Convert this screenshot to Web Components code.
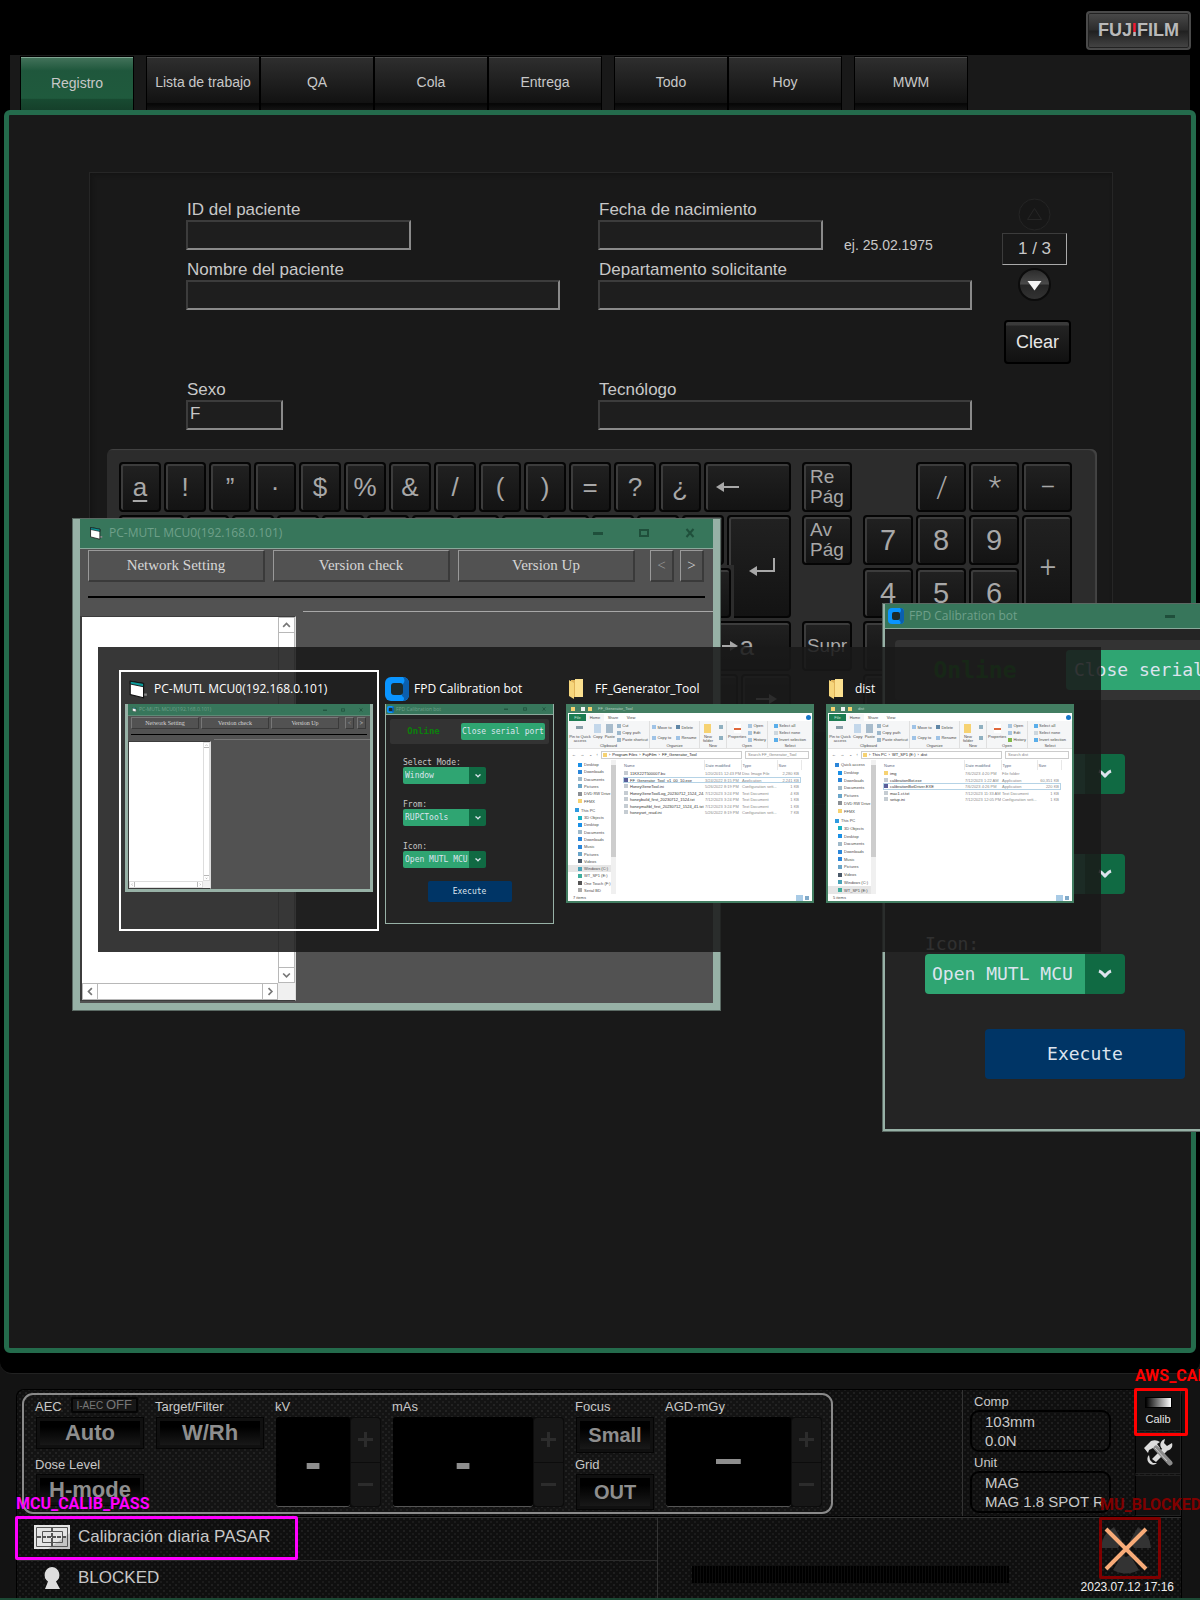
<!DOCTYPE html>
<html lang="es">
<head>
<meta charset="utf-8">
<meta name="viewport" content="width=device-width, initial-scale=1">
<title>Registro</title>
<style>
html,body{margin:0;background:#000;color:#c8c8c8;font-family:"Liberation Sans",sans-serif}
body{overflow-x:hidden}
</style>
</head>
<body>
<aws-console></aws-console>
<script>
const RESET = `*{box-sizing:border-box}button,input,select{font:inherit;color:inherit;margin:0;border-radius:0}button{padding:0;border:0;background:none;cursor:pointer}svg{display:block;flex:none}`;
class Base extends HTMLElement {
  connectedCallback() {
    if (this.shadowRoot) return;
    const t = document.createElement('template');
    t.innerHTML = `<style>${RESET}${this.constructor.css}</style>${this.html()}`;
    this.attachShadow({ mode: 'open' }).append(t.content.cloneNode(true));
  }
  a(n, d = '') { return this.getAttribute(n) ?? d; }
}
const def = (name, css, html) => customElements.define(name, class extends Base {
  static css = css;
  html() { return html(this); }
});

/* ---------- top bar and tabs ---------- */
def('brand-bar', `
:host{display:flex;justify-content:flex-end;height:55px;padding:11px 9px 0 0}
button{width:105px;height:39px;border:2px solid #4a4a4a;border-radius:4px;background:linear-gradient(#4a4a4a,#2c2c2c 48%,#202020 52%,#454545);box-shadow:inset 0 0 0 1px #222;
font-weight:700;font-size:18px;color:#b9b9b9;white-space:nowrap}
i{font-style:normal;background:linear-gradient(#f01a30 0 60%,#b9b9b9 60%);-webkit-background-clip:text;color:transparent}
`, () => `<button>FUJ<i>I</i>FILM</button>`);

def('nav-tab', `
:host{display:block;width:114px;border:1px solid #000;border-bottom:0}
button{display:block;width:100%;height:54px;padding-bottom:6px;font-size:14px;white-space:nowrap;color:#c8c8c8;
border-top:1px solid #4d4d4d;background:linear-gradient(#2e2e2e,#121212 84%,#060606 86%,#161616)}
:host([active]) button{padding-bottom:3px;border-top-color:#7fa491;background:linear-gradient(#417159,#1f573c 24%,#1f5a3d 76%,#184a31 78%,#153f2a)}
`, () => `<button><slot></slot></button>`);

def('tab-strip', `
:host{display:block;padding:0 10px}
nav{display:flex;height:55px;padding:1px 0 0 10px;background:#191919}
.g{display:flex;margin-right:12px}
`, () => `<nav>
<div class="g"><nav-tab active>Registro</nav-tab></div>
<div class="g"><nav-tab>Lista de trabajo</nav-tab><nav-tab>QA</nav-tab><nav-tab>Cola</nav-tab><nav-tab>Entrega</nav-tab></div>
<div class="g"><nav-tab>Todo</nav-tab><nav-tab>Hoy</nav-tab></div>
<div class="g"><nav-tab>MWM</nav-tab></div></nav>`);

/* ---------- patient form ---------- */
def('labeled-field', `
:host{display:block;height:60px}
label{display:block;font-size:17px;line-height:20px;padding-left:1px;white-space:nowrap}
.r{display:flex;gap:21px}
input{display:block;height:30px;padding:0 2px 3px;font-size:17px;background:#1e1e1e;border:2px solid;border-color:#3c3c3c #8a8a8a #8a8a8a #3c3c3c;outline:0}
.h{font-size:14px;line-height:20px;padding-top:15px;white-space:nowrap}
`, e => `<label for="f">${e.a('label')}</label><div class="r"><input id="f" style="width:${e.a('w')}px" value="${e.a('value')}">${e.a('hint') ? `<span class="h">${e.a('hint')}</span>` : ''}</div>`);

def('page-stepper', `
:host{display:flex;flex-direction:column;align-items:center;width:65px}
button{display:block}
.o{height:32px;width:65px;margin:2px 0 3px;border:1px solid #3c3c3c;border-right-color:#aaa;border-bottom-color:#aaa;font-size:17px;line-height:30px;text-align:center}
.c{width:67px;height:44px;margin:19px 0 0 2px;align-self:flex-start;border:2px solid #000;border-radius:4px;font-size:18px;color:#e6e6e6;background:linear-gradient(#3a3a3a 0 3px,#232323 4px,#111)}
`, () => `
<button aria-label="Anterior"><svg width="33" height="33"><circle cx="16.500" cy="16.500" r="15.500" fill="#171717" stroke="#252525"/><path d="M16.500 10.500l7 11h-14z" fill="none" stroke="#262626"/></svg></button>
<output class="o">1 / 3</output>
<button aria-label="Siguiente"><svg width="33" height="33"><defs><linearGradient id="g" x2="0" y2="1"><stop offset="0" stop-color="#2a2a2a"/><stop offset=".48" stop-color="#4a4a4a"/><stop offset=".52" stop-color="#262626"/><stop offset="1" stop-color="#333"/></linearGradient></defs><circle cx="16.500" cy="16.500" r="15.500" fill="url(#g)" stroke="#0c0c0c" stroke-width="2"/><path d="M9.500 13h14l-7 9.500z" fill="#f4f4f4"/></svg></button>
<button class="c">Clear</button>`);

def('patient-form', `
:host{display:grid;grid-template-columns:412px 404px 1fr;padding:27px 0 9px 96px;grid-template-rows:repeat(4,60px)}
page-stepper{grid-column:3;grid-row:1/5;margin-top:-2px}
.l{grid-column:1}.m{grid-column:2}.r2{grid-row:2}.r4{grid-row:4}.r1{grid-row:1}
`, () => `
<labeled-field class="l r1" label="ID del paciente" w="225"></labeled-field>
<labeled-field class="m r1" label="Fecha de nacimiento" w="225" hint="ej. 25.02.1975"></labeled-field>
<labeled-field class="l r2" label="Nombre del paciente" w="374"></labeled-field>
<labeled-field class="m r2" label="Departamento solicitante" w="374"></labeled-field>
<labeled-field class="l r4" label="Sexo" w="97" value="F"></labeled-field>
<labeled-field class="m r4" label="Tecnólogo" w="374"></labeled-field>
<page-stepper></page-stepper>`);

/* ---------- on-screen keyboard ---------- */
def('key-cap', `
:host{display:block;flex:0 0 42px;height:50px}
button{display:flex;align-items:center;justify-content:center;width:100%;height:100%;border:2px solid #050505;border-radius:4px;background:linear-gradient(#212121,#131313);
box-shadow:inset 1px 1px 0 1px #3c3c3c;font-family:"Liberation Sans",sans-serif;font-size:26px;color:#a8a8a8}
:host([num]) button{font-size:29px}
:host([thin]) button{font-family:Roboto,"Liberation Sans",sans-serif;font-weight:300;padding-left:2px}
:host([small]) button{font-size:19px;line-height:20px;text-align:left}
:host([under]) button{text-decoration:underline;text-decoration-thickness:2px;text-underline-offset:4px}
:host([left]) button{justify-content:flex-start;padding-left:10px}
:host([end]) button{justify-content:flex-end;padding-right:35px}
`, () => `<button><slot></slot></button>`);

const arrow = (d, w = 24, h = 16) => `<svg width="${w}" height="${h}" fill="#a8a8a8" stroke="#a8a8a8" stroke-width="2">${d}</svg>`;
def('screen-keyboard', `
:host{display:flex;gap:11px;width:990px;margin-left:17px;padding:13px 12px 8px;background:#2c2c2c;border-radius:6px;box-shadow:inset -2px 1px 1px #444}
.b,.c{display:flex;flex-direction:column;gap:3px}.b{width:672px}
.r,.w{display:flex;gap:3px}
.f{flex:1}
.w .c{width:612px}
.r2{width:605px}
.en{flex:none;height:103px;width:64px;margin-left:-7px}
.en button{width:64px;height:103px;padding-left:7px;clip-path:polygon(0 0,100% 0,100% 100%,7px 100%,7px 50px,0 50px);border:2px solid #050505;border-radius:4px;background:linear-gradient(#212121,#131313);box-shadow:inset 1px 1px 0 1px #3c3c3c;display:grid;place-items:center}
.k50 key-cap,.n key-cap{flex-basis:50px}
.k50{width:50px}
.n{display:grid;grid-template-columns:repeat(4,50px);grid-auto-rows:50px;gap:3px}
.n .p{grid-row:span 2;height:103px}
.sp{height:50px}
`, () => {
  const blank = n => '<key-cap></key-cap>'.repeat(n);
  return `
<div class="b">
 <div class="r"><key-cap under>a</key-cap>${['!', '”', '·', '$', '%', '&amp;', '/', '(', ')', '=', '?', '¿'].map(k => `<key-cap>${k}</key-cap>`).join('')}<key-cap class="f" left>${arrow('<path d="M6 8h17"/><path d="M0 8l8-5v10z" stroke="none"/>')}</key-cap></div>
 <div class="w"><div class="c"><div class="r r2"><key-cap class="f"></key-cap>${blank(12)}</div><div class="r"><key-cap class="f"></key-cap>${blank(12)}</div></div>
 <div class="en"><button aria-label="Intro">${arrow('<path d="M25 2v13H6" fill="none"/><path d="M0 15l8-5v10z" stroke="none"/>', 28, 22)}</button></div></div>
 <div class="r"><key-cap></key-cap>${blank(10)}<key-cap class="f" end>${arrow('<path d="M2 8h10"/><path d="M18 8l-8-5v10z" stroke="none"/>', 20, 16)}a</key-cap></div>
 <div class="r k5"><key-cap style="flex-basis:90px"></key-cap><key-cap class="f"></key-cap><key-cap style="flex-basis:50px"></key-cap><key-cap style="flex-basis:50px"></key-cap><key-cap style="flex-basis:50px">${arrow('<path d="M2 8h14"/><path d="M23 8l-8-5v10z" stroke="none"/>')}</key-cap></div>
</div>
<div class="c k50"><key-cap small>Re<br>Pág</key-cap><key-cap small>Av<br>Pág</key-cap><div class="sp"></div><key-cap small>Supr</key-cap></div>
<div class="n"><span></span><key-cap num thin>/</key-cap><key-cap num thin>*</key-cap><key-cap num thin>−</key-cap>
<key-cap num>7</key-cap><key-cap num>8</key-cap><key-cap num>9</key-cap><key-cap num thin class="p">+</key-cap>
<key-cap num>4</key-cap><key-cap num>5</key-cap><key-cap num>6</key-cap>${blank(3)}<key-cap class="p"></key-cap>${blank(3)}</div>`;
});

def('register-view', `
:host{display:block;flex:1;margin:0 4px;border:5px solid #246b4c;border-radius:6px;background:#191919;padding:57px 78px 0 80px}
section{border:1px solid #262626;background:#191919;padding-bottom:72px;box-shadow:inset 2px 2px 4px #141414}
`, () => `<section><patient-form></patient-form><screen-keyboard></screen-keyboard></section>`);

/* ---------- icons ---------- */
const vbIcon = s => `<svg width="${s}" height="${s}" viewBox="0 0 18 18"><path d="M12 13h5v2h-4z" fill="#888"/><path d="M2 2l12 2v13L2 14z" fill="#fff" stroke="#111"/><path d="M2 2l12 2v3L2 4.500z" fill="#0c9a9a" stroke="#111" stroke-width=".8"/></svg>`;
const ctkIcon = s => `<svg width="${s}" height="${s}" viewBox="0 0 24 24"><rect width="24" height="24" rx="6" fill="#0a95ff"/><path d="M18 0a6 6 0 0 1 6 6v12a6 6 0 0 1-6 6c2-2 1-4-1-5l1-12c2-2 2-5 0-7z" fill="#0b5fae"/><rect x="6" y="6" width="12" height="12" rx="3" fill="#1d2b2b"/></svg>`;
const folderIcon = s => `<svg width="${s}" height="${Math.round(s * 20 / 14)}" viewBox="0 0 14 20"><path d="M2 1h12v17H2z" fill="#e0b45a"/><path d="M6 0h8v18H6z" fill="#fbe08f"/><path d="M0 1l5 3v16l-5-3z" fill="#f6d67c"/></svg>`;
const winBtns = `<div class="wb"><button aria-label="Minimizar"><svg viewBox="0 0 10 10"><path d="M0 5.500h10" stroke-width="3"/></svg></button><button aria-label="Maximizar"><svg viewBox="0 0 10 10"><path d="M1 2h8v6H1z"/></svg></button><button aria-label="Cerrar"><svg viewBox="0 0 10 10"><path d="M1.500 1l7 8M8.500 1l-7 8"/></svg></button></div>`;
const TITLE = `
.t{display:flex;align-items:center;flex:none;height:var(--th);padding-left:var(--tp);gap:var(--tg);background:#37765b;border-bottom:1px solid #8aa99b;color:#6fa08a;font:var(--tf)/1 "Open Sans",sans-serif;white-space:nowrap}
.wb{display:flex;margin-left:auto}.wb button{width:var(--ww);display:grid;place-items:center}
.wb svg{width:var(--ws);height:var(--ws);fill:none;stroke:#1f4f3b;stroke-width:2}`;

/* ---------- MUTL window ---------- */
def('mutl-window', `
:host{display:flex;flex-direction:column;width:649px;height:493px;border:solid #97b1a6;border-width:0 8px 8px;background:#525252;outline:1px solid #5b6a64;outline-offset:-1px;
--th:31px;--tp:9px;--tg:6px;--tf:12px;--ww:46px;--ws:10px;--bw:177px;--bh:32px;--bf:15px;--g:8px;--sp:15px;--nw:24px;--ng:6px;--lw:216px;--sb:17px;--px:8px;--ic:14px;--ra:14px;--rb:13px;--rc:5px;--lb:2px}
:host([mini]){width:248px;height:188px;border-width:0 3px 3px;outline:0;
--th:12px;--tp:4px;--tg:2px;--tf:5px;--ww:18px;--ws:4px;--bw:68px;--bh:12px;--bf:6px;--g:2px;--sp:6px;--nw:9px;--ng:3px;--lw:83px;--sb:7px;--px:3px;--ic:5px;--ra:5px;--rb:4px;--rc:2px;--lb:0px}
:host([mini]) .t{border-bottom-color:#5d8a76}
${TITLE}
.t .ic{width:var(--ic);height:var(--ic)}.t .ic svg{width:100%;height:100%}
.bar{display:flex;padding:1px var(--px) 0;gap:var(--g)}
.bar button{width:var(--bw);height:var(--bh);font:var(--bf)/1 "Liberation Serif",serif;color:#d6d6d6;background:#525252;border:solid;border-width:1px 2px 2px 1px;border-color:#999 #3a3a3a #3a3a3a #999}
.nv{display:flex;gap:var(--ng);margin-left:calc(var(--sp) - var(--g))}.nv button{width:var(--nw)}
.nv button:first-child{color:#999}
:host([mini]) .bar button{border-width:1px;border-color:#777 #3a3a3a #3a3a3a #777}
hr{height:2px;margin:var(--ra) var(--px) var(--rb);border:0;background:#000;flex:none}
:host([mini]) hr{height:1px}
.body{flex:1;display:flex;gap:7px;min-height:0}
:host([mini]) .body{gap:3px}
.list{width:var(--lw);margin:var(--rc) 0 var(--lb);display:grid;grid-template-columns:1fr var(--sb);grid-template-rows:1fr var(--sb);background:#fff;border:1px solid #3c3c3c;border-left-width:2px;border-right-color:#ddd}
:host([mini]) .list{border-left-width:1px}
.v,.h{display:flex;justify-content:space-between;border:1px solid #b8b8b8}
:host([mini]) .v,:host([mini]) .h{border-color:#ddd}
.v{flex-direction:column}
.v button,.h button{width:calc(var(--sb) - 2px);height:calc(var(--sb) - 2px);display:grid;place-items:center}
.v svg,.h svg{width:60%;height:60%;fill:none;stroke:#777;stroke-width:2}
.v button:first-child{border-bottom:1px solid #b8b8b8}.v button:last-child{border-top:1px solid #b8b8b8}
.h button:first-child{border-right:1px solid #b8b8b8}.h button:last-child{border-left:1px solid #b8b8b8}
.cn{background:#f0f0f0}
.pane{flex:1;border-top:1px solid #a8a8a8}
:host([mini]) .pane{border-color:#777}
`, () => {
  const ch = (d, l) => `<button aria-label="${l}"><svg viewBox="0 0 10 10"><path d="${d}"/></svg></button>`;
  return `<div class="t"><span class="ic">${vbIcon(14)}</span><span>PC-MUTL MCU0(192.168.0.101)</span>${winBtns}</div>
<div class="bar"><button>Network Setting</button><button>Version check</button><button>Version Up</button><div class="nv"><button>&lt;</button><button>&gt;</button></div></div><hr>
<div class="body"><div class="list"><div></div><div class="v">${ch('M1 7l4-4 4 4', 'Arriba')}${ch('M1 3l4 4 4-4', 'Abajo')}</div><div class="h">${ch('M7 1L3 5l4 4', 'Izquierda')}${ch('M3 1l4 4-4 4', 'Derecha')}</div><div class="cn"></div></div><div class="pane"></div></div>`;
});

/* ---------- FPD Calibration bot window ---------- */
def('fpd-window', `
:host{display:flex;flex-direction:column;width:406px;height:529px;border:3px solid #97b1a6;border-top:0;background:#242424;color:#dce4ee;outline:1px solid #5b6a64;outline-offset:-1px;
font:18px/20px "DejaVu Sans Mono",monospace;
--th:26px;--tp:3px;--tg:5px;--tf:12px;--ww:46px;--ws:10px;--ic:16px;--m:10px;--mv:11px;--fh:60px;--fp:9px;--op:20px;--bw:200px;--bh:40px;--of:23px;--l:40px;--mt:34px;--me:35px;--g:40px;--lh:20px;--sp:7px;--aw:40px;--eh:50px;--ch:14px;--r:4px}
:host([mini]){width:169px;height:220px;border-width:0 1px 1px;outline:0;font-size:8px;line-height:9px;
--th:11px;--tp:1px;--tg:2px;--tf:5px;--ww:19px;--ws:4px;--ic:7px;--m:4px;--mv:4px;--fh:25px;--fp:4px;--op:8px;--bw:84px;--bh:17px;--of:9px;--l:17px;--mt:14px;--me:13px;--g:16px;--lh:9px;--sp:2px;--aw:17px;--eh:21px;--ch:6px;--r:2px}
${TITLE}
.t .ic svg{width:var(--ic);height:var(--ic)}
.fr{display:flex;align-items:center;flex:none;height:var(--fh);margin:var(--mv) var(--m) 0;padding:0 var(--fp);background:#333;border-radius:var(--r)}
.on{flex:1;text-align:center;padding-right:var(--op);font-weight:700;font-size:var(--of);color:#0b800b}
button.go{height:var(--bh);width:var(--bw);background:#2fa572;border-radius:var(--r);white-space:nowrap;flex:none}
form{display:flex;flex-direction:column;gap:var(--g);margin:var(--mt) 0 0 var(--l)}
label{display:block;height:var(--lh);color:#c8c8c8}
.s{display:grid;width:var(--bw)}
:host([mini]) .s{width:83px}
.s>*{grid-area:1/1}
select{appearance:none;border:0;height:var(--bh);padding:0 0 0 var(--sp);border-radius:var(--r);background:linear-gradient(90deg,#2fa572 calc(100% - var(--aw)),#106a43 0);outline:0}
.s svg{width:var(--ch);height:var(--ch);place-self:center end;margin-right:calc((var(--aw) - var(--ch))/2);fill:none;stroke:#dce4ee;stroke-width:3;pointer-events:none}
button.ex{height:var(--eh);width:var(--bw);align-self:center;margin-top:var(--me);background:#003566;border-radius:var(--r)}
`, e => {
  const fields = e.hasAttribute('mini') ? [['Select Mode:', 'Window'], ['From:', 'RUPCTools'], ['Icon:', 'Open MUTL MCU']] : [['', ''], ['', ''], ['Icon:', 'Open MUTL MCU']];
  return `<div class="t"><span class="ic">${ctkIcon(16)}</span><span>FPD Calibration bot</span>${winBtns}</div>
<div class="fr"><span class="on">Online</span><button class="go">Close serial port</button></div>
<form>${fields.map(([l, v], i) => `<div><label for="s${i}">${l}</label><div class="s"><select id="s${i}"><option>${v}</option></select><svg viewBox="0 0 14 14"><path d="M1 4c3 1 4 3 6 5 2-2 3-4 6-5"/></svg></div></div>`).join('')}</form>
<button class="ex">Execute</button>`;
});

/* ---------- Explorer preview ---------- */
const FILES = {
  FF_Generator_Tool: {
    path: ['Program Files', 'FujiFilm', 'FF_Generator_Tool'], hi: 1,
    nav: ['Desktop', 'Downloads', 'Documents', 'Pictures', 'DVD RW Drive (D:)', 'FFMX', '*This PC', '3D Objects', 'Desktop', 'Documents', 'Downloads', 'Music', 'Pictures', 'Videos', '!Windows (C:)', 'WT_SP1 (E:)', 'One Touch (F:)', 'Serial BD'],
    rows: [['11KX22T500007.bu', '1/20/2015 12:43 PM', 'Disc Image File', '2,280 KB'], ['FF_Generator_Tool_v1_00_10.exe', '3/24/2022 8:15 PM', 'Application', '2,241 KB'], ['HoneyGeneTool.ini', '5/26/2022 8:19 PM', 'Configuration sett...', '1 KB'], ['HoneyGeneToolLog_20230712_1524_24.txt', '7/12/2023 3:24 PM', 'Text Document', '4 KB'], ['honeybuild_first_20230712_1524.txt', '7/12/2023 3:24 PM', 'Text Document', '1 KB'], ['honeymaftbl_first_20230712_1524_41.txt', '7/12/2023 3:24 PM', 'Text Document', '1 KB'], ['honeyset_read.ini', '5/26/2022 8:19 PM', 'Configuration sett...', '7 KB']]
  },
  dist: {
    path: ['This PC', 'WT_SP1 (E:)', 'dist'], hi: 2,
    nav: ['*Quick access', 'Desktop', 'Downloads', 'Documents', 'Pictures', 'DVD RW Drive (D:)', 'FFMX', '*This PC', '3D Objects', 'Desktop', 'Documents', 'Downloads', 'Music', 'Pictures', 'Videos', 'Windows (C:)', '!WT_SP1 (E:)'],
    rows: [['img', '7/6/2023 4:20 PM', 'File folder', ''], ['calibrationBot.exe', '7/12/2023 1:22 AM', 'Application', '60,351 KB'], ['calibrationBotDriver.EXE', '7/6/2023 4:26 PM', 'Application', '220 KB'], ['mac1.ct.txt', '7/12/2023 11:33 AM', 'Text Document', '1 KB'], ['setup.ini', '7/12/2023 12:05 PM', 'Configuration sett...', '1 KB']]
  }
};
const COL = { Desktop: '#1a8fe6', Downloads: '#2b86d9', Documents: '#9fb9c9', Pictures: '#6aa5c9', 'DVD': '#8a8f94', FFMX: '#f6d272', This: '#2f9be0', '3D': '#19b3c4', Music: '#2b86d9', Videos: '#4b5a6a', Windows: '#4aa3b8', WT_SP1: '#3fae9e', One: '#555', Quick: '#2b86d9', Serial: '#aaa' };
def('explorer-window', `
:host{display:flex;flex-direction:column;width:248px;height:199px;border:2px solid #437e62;border-top:0;background:#fff;color:#4a4a4a;font:4px/5px "Liberation Sans",sans-serif}
.t{display:flex;align-items:center;gap:3px;height:9px;padding-left:3px;background:#437e62;color:#b9d2c6;flex:none}
.tabs{display:flex;height:8px;align-items:center;flex:none;padding:1px 1px 0 1px}
.tabs button{width:18px;height:7px;display:grid;place-items:center}
.tabs button.f{background:#1c7d52;color:#cfe5da;width:17px}
.tabs button.h{background:#f5f6f7}
.q{width:5px;height:5px;border-radius:50%;background:#1877c9;margin-left:auto}
.rb{display:flex;height:28px;background:#f5f6f7;border-bottom:1px solid #e2e2e2;flex:none}
.g{display:grid;grid-template-rows:1fr 5px;justify-items:center;border-right:1px solid #e0e0e0;white-space:nowrap;overflow:hidden;padding:1px 1px 0}
.g:last-child{border:0}
.g>div{display:flex;gap:2px;width:100%;justify-content:space-around}
.big{display:flex;flex-direction:column;align-items:center;gap:2px;text-align:center;line-height:4px;padding-top:2px}
.col{display:flex;flex-direction:column;justify-content:space-around}
.col span{display:flex;align-items:center;gap:1px}
.i{display:inline-block;width:4px;height:4px;flex:none}
.I{display:block;width:7px;height:9px}
.ad{display:flex;align-items:center;height:11px;flex:none;padding:0 3px 0 4px;gap:3px}
.ad .nvs{width:26px;display:flex;justify-content:space-between}
.bx{display:flex;align-items:center;gap:2px;height:8px;border:1px solid #ccc;white-space:nowrap;width:141px;color:#222;padding-left:1px}
.bx+input{width:64px}
input{height:8px;border:1px solid #ccc;padding:0 2px;color:#888;outline:0;min-width:0;background:#fff}
input::placeholder{color:#888;opacity:1}
.m{flex:1;display:flex;min-height:0}
nav{width:43px;display:flex;flex-direction:column;overflow:hidden;padding-top:1px}
nav a{flex:1;display:flex;align-items:center;gap:2px;padding-left:10px;color:inherit;text-decoration:none;white-space:nowrap;min-height:0;overflow:hidden}
nav a.top{padding-left:7px}
nav a.hl{background:#e6e6e6}
nav a:not(:first-child).top{margin-top:2px}
.sb{width:5px;margin-right:7px;background:#f0f0f0;display:flex;flex-direction:column}.sb i{flex:0 0 92px;background:#cdcdcd;margin-top:5px}
table{border-collapse:collapse;table-layout:fixed;width:178px;align-self:flex-start}
th{font-weight:400;text-align:left;padding:0 0 0 1px;height:10px;color:#5a6a82;border-right:1px solid #e8e8e8}
td{padding:0 0 0 1px;height:6px;line-height:5px;overflow:hidden;white-space:nowrap;color:#8a8a8a}
tr:nth-child(odd) td{height:7px}
td:first-child{color:#333;font-family:"Liberation Sans Narrow","Liberation Sans",sans-serif}
td:first-child .i{margin-right:2px}
td:last-child{text-align:right;padding-right:2px}
tr.hi{outline:1px solid #b5d3e6;outline-offset:-1px}
.st{height:7px;display:flex;align-items:center;padding:0 3px 0 5px;flex:none;gap:2px}
.st b{margin-left:auto;width:7px;height:6px;background:#a9cbe6}.st i{width:4px;height:4px;background:#7fa9c9}
`, e => {
  const n = e.a('name'), d = FILES[n];
  const i = c => `<i class="i" style="background:${c}"></i>`, I = c => `<i class="I" style="background:${c}"></i>`;
  return `<div class="t">${i('#f6d272')}<span></span>${i('#f0f4f2')}${i('#f6d272')}<span></span><span>${n}</span></div>
<div class="tabs"><button class="f">File</button><button class="h">Home</button><button>Share</button><button>View</button><i class="q"></i></div>
<div class="rb">
<div class="g" style="width:82px"><div><span class="big">${I('linear-gradient(#f5f6f7 20%,#8ba0aa 20% 60%,#f5f6f7 60%)')}Pin to Quick<br>access</span><span class="big">${I('#c3d7ea')}Copy</span><span class="big">${I('#a8bccc')}Paste</span><span class="col"><span>${i('#9db8cc')}Cut</span><span>${i('#9db8cc')}Copy path</span><span>${i('#9db8cc')}Paste shortcut</span></span></div>Clipboard</div>
<div class="g" style="width:50px"><div><span class="col"><span>${i('#9fc3e6')}Move to</span><span>${i('#9fc3e6')}Copy to</span></span><span class="col"><span>${i('#5f86a6')}Delete</span><span>${i('#9fc3e6')}Rename</span></span></div>Organize</div>
<div class="g" style="width:27px"><div><span class="big">${I('#f6d272')}New<br>folder</span><span class="col"><span>${i('#8fb0c0')}</span><span>${i('#8fb0c0')}</span></span></div>New</div>
<div class="g" style="width:41px"><div><span class="big">${I('linear-gradient(#fff 40%,#e0683c 40% 70%,#fff 70%)')}Properties</span><span class="col"><span>${i('#a8c6e0')}Open</span><span>${i('#a8c6e0')}Edit</span><span>${i(n === 'dist' ? '#7fb84a' : '#a8c6e0')}History</span></span></div>Open</div>
<div class="g" style="flex:1"><div><span class="col"><span>${i('#5aaeea')}Select all</span><span>${i('#ccd6de')}Select none</span><span>${i('#5aaeea')}Invert selection</span></span></div>Select</div></div>
<div class="ad"><span class="nvs"><span>←</span><span>→</span><span>⌄</span><span>↑</span></span><div class="bx">${i('#f6d272')}${d.path.map(p => `<span>›</span><span>${p}</span>`).join('')}</div><input aria-label="Search" placeholder="Search ${n}"></div>
<div class="m"><nav>${d.nav.map(x => { const c = x[0] === '*' ? 'top' : x[0] === '!' ? 'hl' : ''; const s = x.replace(/^[*!]/, ''); return `<a href="#" class="${c}">${i(COL[s.split(' ')[0]])}${s}</a>`; }).join('')}</nav><div class="sb"><i></i></div>
<table><colgroup><col style="width:81px"><col style="width:37px"><col style="width:36px"><col style="width:24px"></colgroup><thead><tr><th>Name</th><th>Date modified</th><th>Type</th><th>Size</th></tr></thead>
<tbody>${d.rows.map((r, k) => `<tr${k === d.hi ? ' class="hi"' : ''}>${r.map((c, j) => `<td>${j ? '' : i(c === 'img' ? '#f6d272' : k === d.hi ? '#5a5f9a' : '#c5ccd2')}${c}</td>`).join('')}</tr>`).join('')}</tbody></table></div>
<div class="st">${d.rows.length} items<b></b><i></i></div>`;
});

/* ---------- task switcher ---------- */
def('switch-item', `
:host{display:block;border:2px solid transparent;padding:3px 4px 37px;height:261px;flex:none}
:host([selected]){border-color:#fff}
.h{display:flex;align-items:center;gap:5px;height:29px;padding-bottom:2px;font-size:12px;color:#fff;font-family:"Open Sans",sans-serif;white-space:nowrap}
.k{display:flex;justify-content:center}
.k.vb{padding:0 1px 0 3px}
.k.folder{padding:0 7px 0 3px}
`, e => {
  const k = e.a('kind'), ic = { vb: vbIcon(20), ctk: ctkIcon(24), folder: folderIcon(14) }[k];
  return `<div class="h"><span class="k ${k}">${ic}</span><span>${e.a('title-text')}</span></div><slot></slot>`;
});
def('task-switcher', `
:host{display:flex;align-items:flex-start;width:1003px;height:305px;padding:23px 21px;background:rgba(25,25,25,.87)}
`, () => `<switch-item selected kind="vb" title-text="PC-MUTL MCU0(192.168.0.101)"><mutl-window mini></mutl-window></switch-item>
<switch-item kind="ctk" title-text="FPD Calibration bot"><fpd-window mini></fpd-window></switch-item>
<switch-item kind="folder" title-text="FF_Generator_Tool"><explorer-window name="FF_Generator_Tool"></explorer-window></switch-item>
<switch-item kind="folder" title-text="dist"><explorer-window name="dist"></explorer-window></switch-item>`);

/* ---------- exposure console ---------- */
def('mode-button', `
:host{display:block}
button{display:block;width:100%;height:var(--h,32px);border:1px solid #050505;box-shadow:inset 0 0 0 3px #101010;background:linear-gradient(#000 30%,#1c1c1c);font-weight:700;font-size:var(--f,22px);line-height:20px;color:#8e8e8e}
`, () => `<button><slot></slot></button>`);
def('value-box', `
:host{display:flex;height:90px;border-radius:4px;background:#0a0a0a}
output{flex:1;display:grid;place-items:center;background:#000;border-bottom:1px solid #555;border-radius:3px;font-weight:700;font-size:50px;line-height:50px;color:#8e8e8e}
:host([wide]) output{padding-bottom:8px}
.b{width:31px;display:flex;flex-direction:column;background:#171717;border:1px solid #0c0c0c;border-radius:4px}
.b button{flex:1;display:grid;place-items:center}.b button+button{border-top:1px solid #0c0c0c}
`, () => `<output><slot></slot></output><div class="b"><button aria-label="Más"><svg width="15" height="15"><path d="M0 7.500h15M7.500 0v15" stroke="#2c2c2c" stroke-width="3"/></svg></button><button aria-label="Menos"><svg width="15" height="15"><path d="M0 7.500h15" stroke="#2c2c2c" stroke-width="3"/></svg></button></div>`);

def('exposure-panel', `
:host{display:flex;gap:12px;width:811px;height:121px;margin:3px 0 0 5px;padding:0 0 0 12px;border:2px solid #8a8a8a;border-radius:11px;background:#ffffff05;font-size:13px}
.c{display:flex;flex-direction:column;white-space:nowrap}
.l{display:flex;height:22px;line-height:24px;gap:9px;margin-left:-1px}
.s+.l{height:21px}
.l+*{flex:none}
.s{height:36px}
.o{width:67px;height:16px;margin-top:2px;border:2px solid #050505;border-radius:2px;background:#171717;color:#777;font-size:10px;line-height:12px}
.o b{font-weight:400;font-size:13px}
.tall{--h:36px;--f:20px}
`, () => `
<div class="c" style="width:108px"><div class="l"><span>AEC</span><button class="o">I-AEC <b>OFF</b></button></div><mode-button class="s">Auto</mode-button><div class="l">Dose Level</div><mode-button>H-mode</mode-button></div>
<div class="c" style="width:108px"><div class="l">Target/Filter</div><mode-button>W/Rh</mode-button></div>
<div class="c" style="width:105px"><div class="l">kV</div><value-box>-</value-box></div>
<div class="c" style="width:171px"><div class="l">mAs</div><value-box>-</value-box></div>
<div class="c tall" style="width:78px"><div class="l">Focus</div><mode-button class="s">Small</mode-button><div class="l">Grid</div><mode-button>OUT</mode-button></div>
<div class="c" style="width:156px"><div class="l">AGD-mGy</div><value-box wide>–</value-box></div>`);

def('unit-readout', `
:host{display:flex;flex-direction:column;width:173px;padding:1px 24px 4px 7px;border-left:1px solid #333;font-size:13px}
h4{margin:0 0 0 4px;font-weight:400;font-size:13px;line-height:22px;height:19px}
p{margin:0;width:141px;height:42px;padding:0 0 0 13px;border:2px solid #000;border-radius:9px;font-size:15px;line-height:19px;white-space:nowrap}
`, () => `<h4>Comp</h4><p>103mm<br>0.0N</p><h4>Unit</h4><p>MAG<br>MAG 1.8 SPOT R</p>`);

def('tool-column', `
:host{display:flex;flex-direction:column;width:46px;gap:1px}
button{flex:1;display:flex;flex-direction:column;align-items:center;justify-content:center;gap:5px;font-size:11px;line-height:12px;color:#e6e6e6;background:#121212;border:1px solid #222;border-left-color:#000}
button:first-child{padding-top:5px}
.g{width:27px;height:11px;background:linear-gradient(90deg,#000,#fff);border:1px solid #000}
`, () => `<button><span class="g"></span>Calib</button>
<button aria-label="Herramientas"><svg width="30" height="28" viewBox="0 0 30 28"><g fill="#dcdcdc"><path d="M1 9L8 2q5-2 9 1l-3 2 3 4-3 3-4-3-4 2-1 3z"/><path d="M29 4a6 6 0 1 1-7-4l-1 4 3 3z"/><path d="M6 16a5.500 5.500 0 1 0 8 8l-4 0-3-3z"/><path d="M20 9L9 20l4 3L24 12z"/></g><path d="M13 9l14 15" stroke="#8b8b8b" stroke-width="5" stroke-linecap="round"/><path d="M12 9l12 13" stroke="#ccc" stroke-width="1"/></svg></button>
<button aria-label="Libre"></button>`);

def('status-area', `
:host{display:grid;grid-template-columns:641px 1fr;height:81px;border-top:1px solid #333;flex:none}
.l{border-right:1px solid #333;display:grid;grid-template-rows:43px 1fr}
.r{display:flex;align-items:center;font-size:17px;padding:0 0 4px 17px;gap:8px}
.r:first-child{border-bottom:1px solid #2c2c2c}
.r svg{width:36px}
.d{display:flex;justify-content:space-between;padding:0 7px 4px 34px}
.p{align-self:flex-end;margin-bottom:11px;width:317px;height:17px;background:repeating-linear-gradient(90deg,#000 0 2px,#0c0c0c 2px 3px)}
time{display:block;font-size:12px;line-height:14px;color:#f0f0f0;white-space:nowrap}
.x{display:flex;flex-direction:column;align-items:flex-end;justify-content:space-between;padding-top:5px}
.x svg{margin-right:23px}
`, () => `<div class="l"><div class="r"><svg height="24" viewBox="0 0 36 24"><path d="M0 0h36v24H0z" fill="#e4e4e4"/><path d="M36 8v16H14z" fill="#c4c4c4"/><g fill="none" stroke="#555"><path d="M2.500 2.500h31v19h-31zM8.500 6.500h20v11h-20z"/><path d="M3 12h30M18 3v18" stroke-width="2" stroke-dasharray="4 1"/></g></svg><span>Calibración diaria PASAR</span></div>
<div class="r"><svg height="24" viewBox="0 0 36 24"><path d="M18 1a8 8 0 0 1 4 14.500l4 7.500H11l3-7.500A8 8 0 0 1 18 1z" fill="#dedede"/></svg><span>BLOCKED</span></div></div>
<div class="d"><div class="p"></div><div class="x"><svg width="50" height="52" viewBox="0 0 50 52"><g fill="#333"><path d="M0 25A26 26 0 0 1 13 4l8 14-4 7z"/><path d="M50 25A26 26 0 0 0 37 4l-8 14 4 7z"/><path d="M25 34l4-2 9 15a26 26 0 0 1-26 0l9-15z"/></g><path d="M5 6l40 40M45 6L5 46" stroke="#f8ab78" stroke-width="4"/></svg><time>2023.07.12 17:16</time></div></div>`);

def('marker-box', `
:host{position:absolute;z-index:3;color:var(--c);pointer-events:none}
div{border:3px solid var(--c);border-radius:2px;width:100%;height:100%}
span{position:absolute;left:1px;bottom:calc(100% + 2px);font:700 16px/20px Roboto,sans-serif;white-space:nowrap}
`, e => `<span>${e.a('text')}</span><div></div>`);

def('exposure-console', `
:host{display:block;position:relative;padding:25px 18px 0 16px;background:#131313;border-bottom:2px solid #1c4a35;margin-top:-10px}
.p{border:solid #000;border-width:1px 1px 0 1px;border-radius:8px 8px 0 0;background-color:#0f0f0f;
background-image:radial-gradient(#1f1f1f 1px,transparent 1px),radial-gradient(#1b1b1b 1px,transparent 1px);background-size:6px 6px;background-position:0 0,3px 3px}
.u{display:flex;height:127px;border-bottom:1px solid #000}
unit-readout{margin-left:auto}
`, () => `<div class="p"><div class="u"><exposure-panel></exposure-panel><unit-readout></unit-readout><tool-column></tool-column></div><status-area></status-area></div>
<marker-box text="MCU_CALIB_PASS" style="--c:#f0f;left:15px;bottom:38px;width:283px;height:44px"></marker-box>
<marker-box text="AWS_CAL" style="--c:#f00;right:12px;bottom:162px;width:54px;height:48px"></marker-box>
<marker-box text="MU_BLOCKED" style="--c:#800000;right:39px;bottom:19px;width:62px;height:62px"></marker-box>`);

/* ---------- whole screen ---------- */
def('aws-console', `
:host{display:flex;flex-direction:column;position:relative;min-height:100vh;overflow:hidden;background:#000}
.top{flex:1;display:flex;flex-direction:column;padding-bottom:20px;background:#000;border-radius:0 0 12px 12px;border-bottom:1px solid #222;position:relative;z-index:1}
.win{position:absolute;z-index:2}
`, () => `<div class="top"><brand-bar></brand-bar><tab-strip></tab-strip><register-view></register-view></div><exposure-console></exposure-console>
<mutl-window class="win" style="left:72px;top:518px"></mutl-window>
<fpd-window class="win" style="left:882px;top:603px"></fpd-window>
<task-switcher class="win" style="left:98px;top:647px"></task-switcher>`);
</script>
</body>
</html>
